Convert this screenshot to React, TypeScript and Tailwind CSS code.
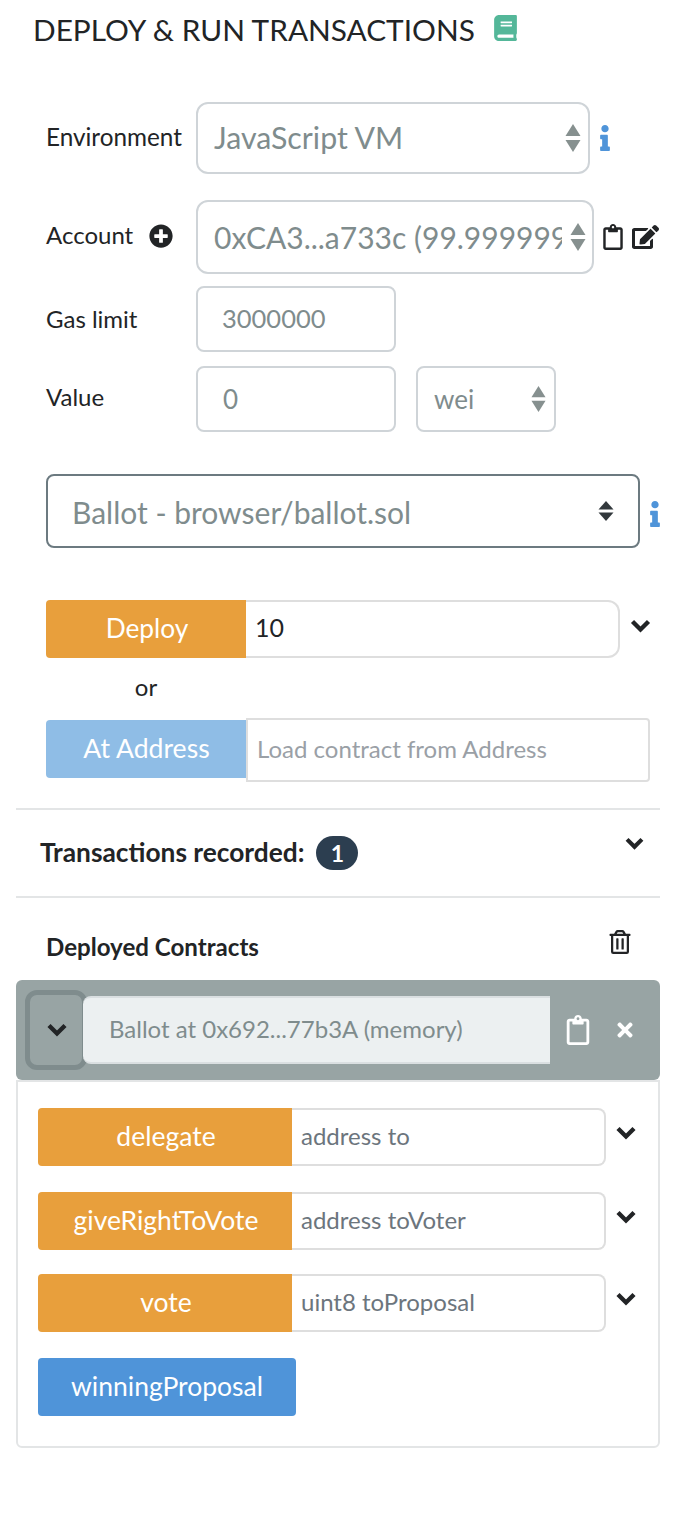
import { FaBook, FaEdit, FaInfo, FaPlusCircle, FaRegClipboard, FaRegTrashAlt, FaTimes } from "react-icons/fa";

// Up/down carets drawn on the native-looking selects
function Carets({ className }: { className: string }) {
  return (
    <svg viewBox="0 0 16 28" preserveAspectRatio="none" className={className} fill="currentColor">
      <path d="M8 0 L15.500 12 L0.500 12 Z" />
      <path d="M8 28 L15.500 16 L0.500 16 Z" />
    </svg>
  );
}

function Chevron({ className }: { className: string }) {
  return (
    <svg viewBox="0 0 20 14" className={className} fill="none" stroke="currentColor" strokeWidth="4.400">
      <path d="M2 2.500 L10 10.500 L18 2.500" />
    </svg>
  );
}

function FunctionRow({ name, placeholder, mt }: { name: string; placeholder: string; mt: string }) {
  return (
    <div className={`flex items-start ${mt}`}>
      <button className="h-[58px] w-[254px] rounded-l-[4px] bg-[#e89f3c] pl-[2px] text-[26.500px] text-white">{name}</button>
      <div className="flex h-[58px] w-[314px] items-center rounded-r-[8px] border-2 border-l-0 border-[#dedede] pb-[3px] pl-[9px] text-[24px] text-[#6c757d]">
        {placeholder}
      </div>
      <Chevron className="ml-[10px] mt-[18px] h-[14px] w-[20px] text-[#222426]" />
    </div>
  );
}

export default function App() {
  return (
    <div className="h-[1524px] w-[674px] overflow-hidden bg-white font-['Lato',sans-serif] text-[#222426]">
      <div className="flex items-center pl-[33px] pt-[11px]">
        <h1 className="text-[29.800px] leading-[38px]">DEPLOY &amp; RUN TRANSACTIONS</h1>
        <FaBook className="ml-[19px] mb-[4px] h-[26px] w-[23px] text-[#54b799]" />
      </div>

      {/* Environment */}
      <div className="mt-[53px] flex items-center pl-[46px]">
        <span className="mb-[2px] w-[150px] text-[24.300px]">Environment</span>
        <div className="flex h-[72px] w-[394px] items-center justify-between rounded-[12px] border-2 border-[#cfd4d8] pl-[16px] pr-[7px] text-[30.300px] text-[#7f8c8d]">
          <span>JavaScript VM</span>
          <Carets className="h-[28px] w-[16px] text-[#86908f]" />
        </div>
        <FaInfo className="ml-[8px] h-[26px] w-[14px] text-[#4f94d9]" />
      </div>

      {/* Account */}
      <div className="mt-[26px] flex items-center pl-[46px]">
        <span className="mb-[4px] flex w-[150px] items-center text-[24px]">
          Account
          <FaPlusCircle className="ml-[16px] mt-[2px] h-[24px] w-[24px]" />
        </span>
        <div className="flex h-[74px] w-[398px] items-center rounded-[12px] border-2 border-[#cfd4d8] pl-[16px] pr-[6px] text-[30px] text-[#7f8c8d]">
          <span className="w-[348px] overflow-hidden whitespace-nowrap">0xCA3...a733c (99.9999999 ether)</span>
          <Carets className="ml-[8px] h-[28px] w-[16px] shrink-0 text-[#86908f]" />
        </div>
        <FaRegClipboard className="ml-[9px] h-[26px] w-[20px]" />
        <FaEdit className="ml-[9px] h-[24px] w-[27px]" />
      </div>

      {/* Gas limit */}
      <div className="mt-[12px] flex items-center pl-[46px]">
        <span className="w-[150px] text-[24px]">Gas limit</span>
        <div className="flex h-[66px] w-[200px] items-center rounded-[8px] border-2 border-[#cfd4d8] pb-[2px] pl-[24px] text-[25.500px] text-[#7f8c8d]">3000000</div>
      </div>

      {/* Value */}
      <div className="mt-[14px] flex items-center pl-[46px]">
        <span className="mb-[4px] w-[150px] text-[24px]">Value</span>
        <div className="flex h-[66px] w-[200px] items-center rounded-[8px] border-2 border-[#cfd4d8] pl-[25px] text-[26px] text-[#7f8c8d]">0</div>
        <div className="ml-[20px] flex h-[66px] w-[140px] items-center justify-between rounded-[8px] border-2 border-[#cfd4d8] pl-[16px] pr-[8px] text-[26px] text-[#7f8c8d]">
          <span>wei</span>
          <Carets className="h-[26px] w-[15px] text-[#86908f]" />
        </div>
      </div>

      {/* Contract */}
      <div className="mt-[42px] flex items-center pl-[46px]">
        <div className="flex h-[74px] w-[594px] items-center justify-between rounded-[8px] border-2 border-[#6c7a80] pl-[24px] pr-[24px] text-[30px] text-[#7f8c8d]">
          <span className="mt-[2px]">Ballot - browser/ballot.sol</span>
          <Carets className="h-[20px] w-[16px] text-[#32383c]" />
        </div>
        <FaInfo className="ml-[9px] mt-[5px] h-[26px] w-[12px] text-[#4f94d9]" />
      </div>

      {/* Deploy */}
      <div className="mt-[52px] flex items-start pl-[46px]">
        <button className="h-[58px] w-[200px] rounded-l-[4px] bg-[#e89f3c] pl-[2px] text-[26.300px] text-white">Deploy</button>
        <div className="flex h-[58px] w-[374px] items-center rounded-r-[12px] border-2 border-l-0 border-[#dedede] pb-[2px] pl-[9px] text-[25px] text-[#222426]">10</div>
        <Chevron className="ml-[10px] mt-[19px] h-[14px] w-[21px]" />
      </div>
      <div className="h-[62px] w-[292px] text-center text-[24px] leading-[58px]">or</div>
      <div className="flex items-start pl-[46px]">
        <button className="h-[58px] w-[200px] rounded-l-[4px] bg-[#8fbde6] pl-[1px] text-[26.600px] text-white">At Address</button>
        <div className="-mt-[2px] flex h-[64px] w-[404px] items-center rounded-r-[4px] border-2 border-[#dedede] pb-[3px] pl-[9px] text-[24px] text-[#9aa0a6]">
          Load contract from Address
        </div>
      </div>

      {/* Transactions recorded */}
      <div className="ml-[16px] mt-[26px] flex h-[90px] w-[644px] items-center border-y-2 border-[#e3e5e6] pl-[24px] pr-[16px]">
        <span className="text-[26.300px] font-bold">Transactions recorded:</span>
        <span className="ml-[12px] flex h-[34px] w-[42px] items-center justify-center rounded-full bg-[#2c3e50] text-[23px] font-bold text-white">1</span>
        <Chevron className="mb-[20px] ml-auto h-[13px] w-[19px]" />
      </div>

      {/* Deployed contracts */}
      <div className="ml-[16px] flex h-[82px] w-[644px] items-center justify-between pl-[30px] pr-[29px]">
        <span className="mt-[17px] text-[24.100px] font-bold">Deployed Contracts</span>
        <FaRegTrashAlt className="mt-[5px] h-[24px] w-[22px]" />
      </div>

      <div className="ml-[16px] flex h-[100px] w-[644px] items-center rounded-[6px] bg-[#98a4a4] pl-[9px]">
        <div className="flex h-[80px] w-[62px] items-center justify-center rounded-[12px] border-[5px] border-[#7f8c8d]">
          <Chevron className="ml-[2px] h-[14px] w-[20px]" />
        </div>
        <div className="-ml-[4px] flex h-[68px] w-[467px] items-center rounded-l-[8px] border-y-2 border-[#dadfe1] bg-[#ecf0f1] pb-[3px] pl-[26px] text-[24px] text-[#7f8c8d]">
          Ballot at 0x692...77b3A (memory)
        </div>
        <FaRegClipboard className="ml-[16px] h-[30px] w-[24px] text-white" />
        <FaTimes className="ml-[26px] h-[22px] w-[18px] text-white" />
      </div>

      <div className="ml-[16px] h-[368px] w-[644px] rounded-b-[6px] border-2 border-[#e3e5e6] px-[20px] pt-[26px]">
        <FunctionRow name="delegate" placeholder="address to" mt="" />
        <FunctionRow name="giveRightToVote" placeholder="address toVoter" mt="mt-[26px]" />
        <FunctionRow name="vote" placeholder="uint8 toProposal" mt="mt-[24px]" />
        <button className="mt-[26px] h-[58px] w-[258px] rounded-[4px] bg-[#4f94d9] text-[26.500px] text-white">winningProposal</button>
      </div>
    </div>
  );
}
